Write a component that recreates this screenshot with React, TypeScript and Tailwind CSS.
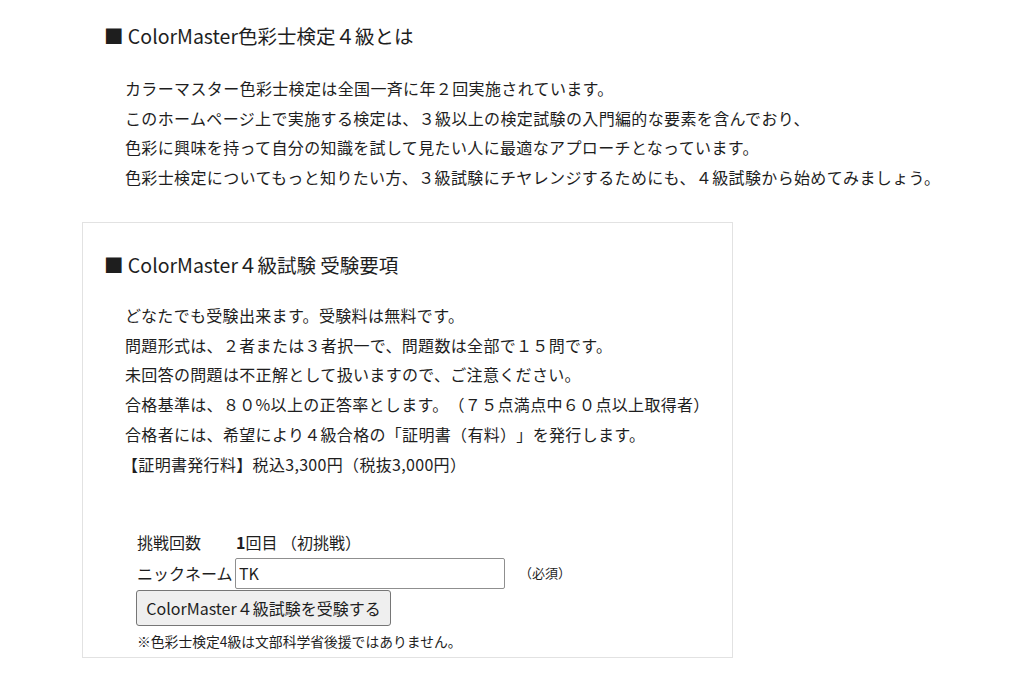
import React from "react";

const font = {
  fontFamily: '"Noto Sans CJK JP", "Noto Sans", sans-serif',
  textSpacingTrim: "space-all",
} as React.CSSProperties;

export default function App() {
  return (
    <div
      className="w-[1024px] h-[684px] bg-white text-[#1e1e1e] overflow-hidden [text-spacing-trim:space-all]"
      style={font}
    >
      <div className="pt-[22px]">
        <h2 className="ml-[104px] text-[19.5px] leading-[28px]">
          ■ ColorMaster色彩士検定４級とは
        </h2>
        <div className="ml-[125px] mt-[24px] text-[16px] leading-[29.7px] tracking-[0.36px]">
          <p>カラーマスター色彩士検定は全国一斉に年２回実施されています。</p>
          <p>このホームページ上で実施する検定は、３級以上の検定試験の入門編的な要素を含んでおり、</p>
          <p>色彩に興味を持って自分の知識を試して見たい人に最適なアプローチとなっています。</p>
          <p>色彩士検定についてもっと知りたい方、３級試験にチヤレンジするためにも、４級試験から始めてみましょう。</p>
        </div>

        <div className="ml-[82px] mt-[29px] w-[651px] h-[436px] border border-[#e2e2e2] pl-[21px] pt-[28px]">
          <h2 className="text-[19.5px] leading-[28px]">
            ■ ColorMaster４級試験 受験要項
          </h2>
          <div className="ml-[21px] mt-[22px] text-[16px] leading-[29.8px] tracking-[0.32px]">
            <p>どなたでも受験出来ます。受験料は無料です。</p>
            <p>問題形式は、２者または３者択一で、問題数は全部で１５問です。</p>
            <p>未回答の問題は不正解として扱いますので、ご注意ください。</p>
            <p>合格基準は、８０%以上の正答率とします。（７５点満点中６０点以上取得者）</p>
            <p>合格者には、希望により４級合格の「証明書（有料）」を発行します。</p>
            <p className="-ml-[3px]">【証明書発行料】税込3,300円（税抜3,000円）</p>
          </div>

          <div className="ml-[33px] mt-[48px] text-[16px]">
            <div className="flex items-center h-[28px]">
              <span className="w-[99px]">挑戦回数</span>
              <span>
                <b className="font-bold">1</b>回目 （初挑戦）
              </span>
            </div>
            <div className="flex items-center mt-[2px] h-[31px]">
              <span className="w-[98px] whitespace-nowrap">ニックネーム</span>
              <input
                defaultValue="TK"
                className="w-[270px] h-[31px] border border-[#8f8f8f] rounded-[2px] px-[3px] text-[16px] outline-none"
                style={font}
              />
              <span className="ml-[14px] text-[13px]">（必須）</span>
            </div>
            <button
              className="mt-[1px] -ml-[1px] w-[255px] h-[36px] bg-[#efefef] border border-[#767676] rounded-[3px] text-[16px] text-[#1e1e1e]"
              style={font}
            >
              ColorMaster４級試験を受験する
            </button>
            <p className="mt-[5px] text-[13.8px] leading-[20px]">
              ※色彩士検定4級は文部科学省後援ではありません。
            </p>
          </div>
        </div>
      </div>
    </div>
  );
}
